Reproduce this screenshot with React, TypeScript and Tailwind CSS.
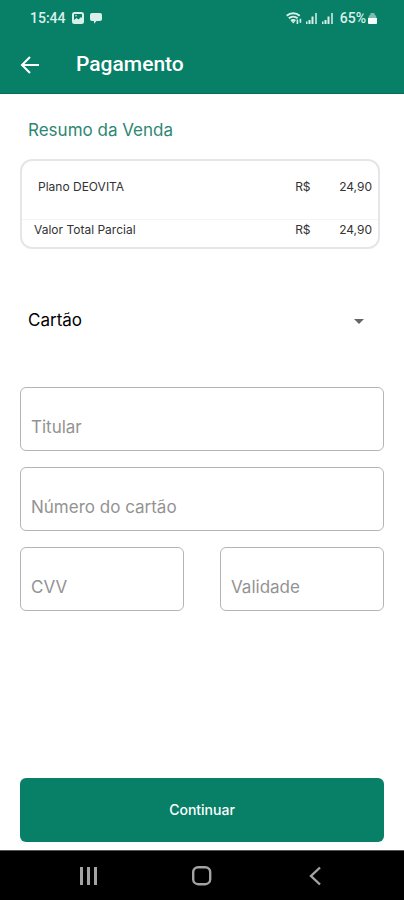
import React from "react";

const items = [{ name: "Plano DEOVITA", price: "24,90" }];
const total = "24,90";

function Signal() {
  return (
    <svg className="h-3 w-3" viewBox="0 0 12 12" fill="currentColor" aria-hidden="true">
      <path d="M0 9.5h1.5V12H0zM2.5 8h2v4h-2zM5.5 4.5h2V12h-2z" />
      <path d="M9 1h2v11H9z" opacity="0.75" />
    </svg>
  );
}

function StatusBar() {
  return (
    <div className="flex h-9 items-center justify-between pl-[30px] pr-[27px] font-[Roboto,sans-serif] text-sm font-medium text-[#d9f0ea]">
      <div className="flex items-center gap-1.5">
        <span>15:44</span>
        <svg className="h-3 w-3" viewBox="0 0 12 12" aria-hidden="true">
          <rect x="1" y="1" width="10" height="10" rx="1.5" fill="none" stroke="currentColor" strokeWidth="2" />
          <path d="M2 10V8l2.5-2 2 1.5L9 5l1 1v4z" fill="currentColor" />
          <circle cx="4" cy="3.8" r="0.8" fill="currentColor" />
        </svg>
        <svg className="h-3 w-3" viewBox="0 0 12 12" fill="currentColor" aria-hidden="true">
          <path d="M2 1h8a2 2 0 0 1 2 2v4a2 2 0 0 1-2 2H6.5L4 11.7V9H2a2 2 0 0 1-2-2V3a2 2 0 0 1 2-2z" />
        </svg>
      </div>
      <div className="flex items-center gap-1">
        <svg className="h-3 w-4" viewBox="0 0 16 12" fill="none" stroke="currentColor" strokeWidth="2" aria-hidden="true">
          <path d="M0.7 3.7a10 10 0 0 1 13 0M2.8 6.3a6.8 6.8 0 0 1 8.8 0M5 8.8a3.7 3.7 0 0 1 4.4 0" />
          <path d="M5.2 9.2h4L7.2 11.5z" fill="currentColor" stroke="none" />
          <path d="M11.4 7.5V12M14.4 6.8v4" strokeWidth="1.6" />
        </svg>
        <Signal />
        <Signal />
        <div className="flex items-center gap-0.5 pl-0.5">
          <span>65%</span>
          <svg className="h-3 w-[9px]" viewBox="0 0 9 12" aria-hidden="true">
            <path d="M2.5 2.5V1h4v1.5q2 0.5 2 3.5h-8q0-3 2-3.5z" fill="#7fbcae" />
            <path d="M0 6h9v5q0 1-1 1H1q-1 0-1-1z" fill="#f4fffc" />
          </svg>
        </div>
      </div>
    </div>
  );
}

function Field({ label, numeric }: { label: string; numeric?: boolean }) {
  return (
    <input
      type="text"
      aria-label={label}
      placeholder={label}
      inputMode={numeric ? "numeric" : "text"}
      className="h-16 w-full min-w-0 rounded-md border border-[#b4b4b4] bg-white px-2.5 pt-4 text-[17px] text-black outline-none placeholder:text-[#939393] focus:border-[#088068]"
    />
  );
}

export default function App() {
  return (
    <div className="flex min-h-screen flex-col bg-white font-[Inter,sans-serif] text-black">
      <header className="border-b border-[#056f59] bg-[#088068] text-white">
        <StatusBar />
        <div className="flex h-[57px] items-center gap-9 px-5">
          <button type="button" aria-label="Voltar" className="size-5">
            <svg viewBox="0 0 20 20" fill="none" stroke="currentColor" strokeWidth="2" aria-hidden="true">
              <path d="M19 10H2.5M10 2L2 10l8 8" />
            </svg>
          </button>
          <h1 className="font-[Roboto,sans-serif] text-[21px] font-medium">Pagamento</h1>
        </div>
      </header>

      <main className="flex grow flex-col px-5 pt-6 pb-2">
        <h2 className="px-2 text-[17px] leading-6 text-[#2c8772]">Resumo da Venda</h2>

        <div className="mt-[17px] mr-1 rounded-xl border-2 border-[#e6e6e6] text-xs text-[#333333]">
          <table className="w-full">
            <tbody>
              {items.map((item) => (
                <tr key={item.name} className="h-[58px]">
                  <td className="pb-1.5 pl-4">{item.name}</td>
                  <td className="w-11 pb-1.5">R$</td>
                  <td className="w-9 pr-1.5 pb-1.5 text-right">{item.price}</td>
                </tr>
              ))}
              <tr className="h-7 border-t border-[#f4f4f4]">
                <td className="pb-1.5 pl-3">Valor Total Parcial</td>
                <td className="w-11 pb-1.5">R$</td>
                <td className="w-9 pr-1.5 pb-1.5 text-right">{total}</td>
              </tr>
            </tbody>
          </table>
        </div>

        <div className="mt-12 flex h-12 items-center">
          <select
            aria-label="Forma de pagamento"
            className="h-12 grow appearance-none bg-transparent pl-2 text-[17px] outline-none"
          >
            <option>Cartão</option>
          </select>
          <svg className="mr-5 -ml-2.5 h-[5px] w-2.5" viewBox="0 0 10 5" fill="#666666" aria-hidden="true">
            <path d="M0 0h10L5 5z" />
          </svg>
        </div>

        <form id="card-form" className="mt-[42px] flex flex-col gap-4">
          <Field label="Titular" />
          <Field label="Número do cartão" numeric />
          <div className="grid grid-cols-2 gap-9">
            <Field label="CVV" numeric />
            <Field label="Validade" numeric />
          </div>
        </form>

        <button
          type="submit"
          form="card-form"
          className="mt-auto h-16 w-full rounded-md bg-[#088068] text-sm font-medium text-white"
        >
          Continuar
        </button>
      </main>

      <nav className="flex h-[50px] items-center justify-around border-t border-[#555555] bg-black px-8 text-[#a3a3a3]">
        <button type="button" aria-label="Recentes" className="size-5">
          <svg viewBox="0 0 20 20" stroke="currentColor" strokeWidth="3" aria-hidden="true">
            <path d="M2.5 1v18M9.5 1v18M16.5 1v18" />
          </svg>
        </button>
        <button type="button" aria-label="Início" className="size-5">
          <svg viewBox="0 0 20 20" fill="none" stroke="currentColor" strokeWidth="2.4" aria-hidden="true">
            <rect x="1.2" y="1.2" width="17" height="17" rx="5" />
          </svg>
        </button>
        <button type="button" aria-label="Retornar" className="size-5">
          <svg viewBox="0 0 20 20" fill="none" stroke="currentColor" strokeWidth="2.4" aria-hidden="true">
            <path d="M15 1.5L6 10l9 8.5" />
          </svg>
        </button>
      </nav>
    </div>
  );
}
